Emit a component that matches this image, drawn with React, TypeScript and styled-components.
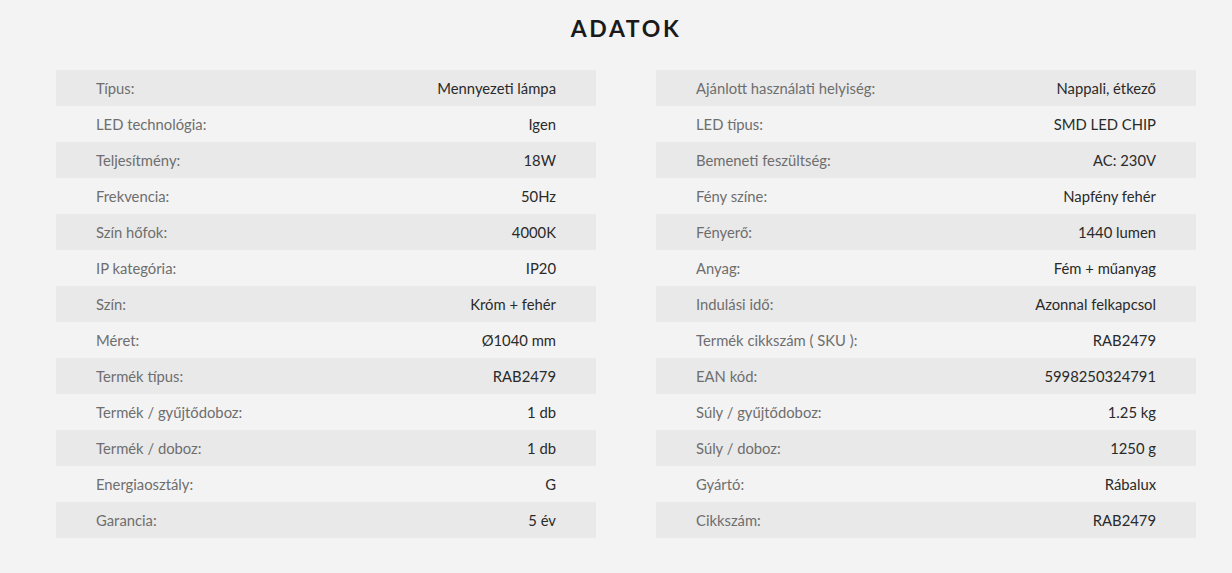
import React from "react";
import styled, { createGlobalStyle } from "styled-components";

const Global = createGlobalStyle`
  html, body { margin: 0; padding: 0; background: #f3f3f3; }
  body { font-family: Lato, "Noto Sans", sans-serif; }
`;

const Page = styled.div`
  padding: 0 0 0 20px;
  background: #f3f3f3;
  min-height: 573px;
  box-sizing: border-box;
`;

const Container = styled.div`
  width: 1140px;
  margin: 0 auto;
`;

const Title = styled.h2`
  margin: 0;
  padding-top: 15px;
  height: 70px;
  box-sizing: border-box;
  text-align: center;
  font-family: Lato, sans-serif;
  font-weight: 700;
  font-size: 23px;
  line-height: 26px;
  letter-spacing: 2.6px;
  color: #1a1a1a;
`;

const Columns = styled.div`
  display: grid;
  grid-template-columns: 540px 540px;
  column-gap: 60px;
`;

const Table = styled.div`
  display: flex;
  flex-direction: column;
`;

const Row = styled.div<{ $shaded: boolean }>`
  display: flex;
  justify-content: space-between;
  align-items: center;
  height: 36px;
  padding: 0 40px;
  background: ${(p) => (p.$shaded ? "#e9e9e9" : "transparent")};
  font-size: 14.8px;
`;

const Label = styled.span`
  color: #6e6e6e;
`;

const Value = styled.span`
  color: #2a2a2a;
`;

const left: [string, string][] = [
  ["Típus:", "Mennyezeti lámpa"],
  ["LED technológia:", "Igen"],
  ["Teljesítmény:", "18W"],
  ["Frekvencia:", "50Hz"],
  ["Szín hőfok:", "4000K"],
  ["IP kategória:", "IP20"],
  ["Szín:", "Króm + fehér"],
  ["Méret:", "Ø1040 mm"],
  ["Termék típus:", "RAB2479"],
  ["Termék / gyűjtődoboz:", "1 db"],
  ["Termék / doboz:", "1 db"],
  ["Energiaosztály:", "G"],
  ["Garancia:", "5 év"],
];

const right: [string, string][] = [
  ["Ajánlott használati helyiség:", "Nappali, étkező"],
  ["LED típus:", "SMD LED CHIP"],
  ["Bemeneti feszültség:", "AC: 230V"],
  ["Fény színe:", "Napfény fehér"],
  ["Fényerő:", "1440 lumen"],
  ["Anyag:", "Fém + műanyag"],
  ["Indulási idő:", "Azonnal felkapcsol"],
  ["Termék cikkszám ( SKU ):", "RAB2479"],
  ["EAN kód:", "5998250324791"],
  ["Súly / gyűjtődoboz:", "1.25 kg"],
  ["Súly / doboz:", "1250 g"],
  ["Gyártó:", "Rábalux"],
  ["Cikkszám:", "RAB2479"],
];

const SpecTable = ({ rows }: { rows: [string, string][] }) => (
  <Table>
    {rows.map(([l, v], i) => (
      <Row key={l} $shaded={i % 2 === 0}>
        <Label>{l}</Label>
        <Value>{v}</Value>
      </Row>
    ))}
  </Table>
);

export default function App() {
  return (
    <>
      <Global />
      <Page>
        <Container>
          <Title>ADATOK</Title>
          <Columns>
            <SpecTable rows={left} />
            <SpecTable rows={right} />
          </Columns>
        </Container>
      </Page>
    </>
  );
}
